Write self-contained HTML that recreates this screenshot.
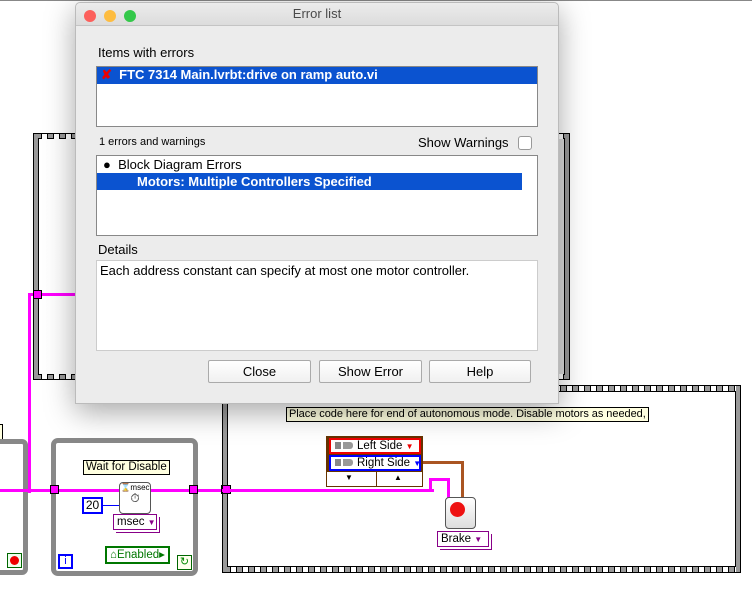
<!DOCTYPE html>
<html><head><meta charset="utf-8"><style>
*{box-sizing:border-box;margin:0;padding:0}
body{width:752px;height:589px;background:#fff;position:relative;overflow:hidden;font-family:"Liberation Sans",sans-serif;font-size:12px}
.a{position:absolute}
.film{position:absolute;background:#ddd;border:1px solid #000}
.filmh{background-image:repeating-linear-gradient(90deg,transparent 0 3px,#000 3px 4px,#fff 4px 9px,#000 9px 10px,transparent 10px 12px);}
.pk{background:#f0f;}
.term{position:absolute;width:9px;height:9px;background:#f0f;border:1px solid #000}
.lbl{position:absolute;background:#ffffe0;border:1px solid #000;font-size:11.5px;padding:0 2px;line-height:13px;white-space:nowrap}
.dd{position:absolute;border:1px solid #808;background:#fff;font-size:11.5px;box-shadow:2px 2px 0 #fff,3px 3px 0 #808;white-space:nowrap}
.btn{position:absolute;top:360px;height:23px;border:1px solid #aaa;background:linear-gradient(#fff,#f0f0f0);text-align:center;line-height:21px;font-size:13px;border-radius:2px}
.plug{display:inline-block;width:18px;height:7px;margin-right:4px;vertical-align:0;background:linear-gradient(90deg,#888 0 6px,transparent 6px 8px,#999 8px);border-radius:0 3px 3px 0}
</style></head><body>
<div class="a" style="left:0;top:0;width:752px;height:1px;background:#888"></div>
<div class="film" style="left:33px;top:133px;width:537px;height:247px;background:#999"></div>
<div class="a" style="left:38px;top:138px;width:527px;height:237px;background:#000"></div>
<div class="a" style="left:39px;top:139px;width:525px;height:235px;background:linear-gradient(90deg,#fff,#eee 60%,#ddd)"></div>
<div class="a filmh" style="left:38px;top:134px;width:527px;height:5px"></div>
<div class="a filmh" style="left:38px;top:374px;width:527px;height:5px"></div>
<div class="a pk" style="left:28px;top:293px;width:3px;height:200px"></div>
<div class="a pk" style="left:28px;top:293px;width:48px;height:3px"></div>
<div class="term" style="left:33px;top:290px"></div>
<div class="a" style="left:0;top:424px;width:3px;height:18px;border:1px solid #000;border-left:0;background:#ffffe0"></div>
<div class="a" style="left:-10px;top:439px;width:38px;height:136px;border:5px solid #888;border-radius:6px"></div>
<div class="a" style="left:7px;top:553px;width:15px;height:15px;border:1px solid #060;background:#efe"><div style="margin:2px;width:9px;height:9px;border-radius:50%;background:#e00"></div></div>
<div class="a" style="left:51px;top:438px;width:147px;height:138px;border:5px solid #888;border-radius:7px"></div>
<div class="lbl" style="left:83px;top:460px">Wait for Disable</div>
<div class="a pk" style="left:0;top:489px;width:432px;height:3px"></div>
<div class="term" style="left:50px;top:485px"></div>
<div class="term" style="left:189px;top:485px"></div>
<div class="term" style="left:221px;top:485px"></div>
<div class="a" style="left:82px;top:497px;width:21px;height:17px;border:2px solid #00f;background:#fff;font-size:12px;text-align:center;line-height:13px">20</div>
<div class="a" style="left:103px;top:505px;width:17px;height:1px;background:#00f"></div>
<div class="a" style="left:119px;top:482px;width:32px;height:32px;border:1px solid #555;border-radius:4px;background:#fff;font-size:8px;text-align:center;line-height:10px">⌛msec<br><span style="font-size:12px">⏱</span></div>
<div class="dd" style="left:113px;top:514px;width:44px;height:16px;padding-left:3px;line-height:14px">msec <span style="color:#808;font-size:8px">▼</span></div>
<div class="a" style="left:105px;top:546px;width:65px;height:18px;border:2px solid #070;background:#fff;color:#070;font-size:11.5px;line-height:14px;padding-left:3px">⌂Enabled▸</div>
<div class="a" style="left:58px;top:554px;width:15px;height:15px;border:2px solid #00f;background:#fff;color:#00f;font-size:11px;text-align:center;line-height:11px">i</div>
<div class="a" style="left:177px;top:555px;width:15px;height:15px;border:1px solid #060;background:#ffe;color:#080;font-size:11px;text-align:center;line-height:13px">↻</div>
<div class="film" style="left:222px;top:385px;width:519px;height:188px;background:#999"></div>
<div class="a" style="left:227px;top:391px;width:509px;height:176px;background:#000"></div>
<div class="a" style="left:228px;top:392px;width:507px;height:174px;background:#fff"></div>
<div class="a filmh" style="left:227px;top:386px;width:509px;height:5px"></div>
<div class="a filmh" style="left:227px;top:567px;width:509px;height:5px"></div>
<div class="term" style="left:222px;top:485px"></div>
<div class="a pk" style="left:222px;top:489px;width:212px;height:3px"></div>
<div class="lbl" style="left:286px;top:407px;font-size:11px;letter-spacing:-0.05px">Place code here for end of autonomous mode. Disable motors as needed,</div>
<div class="a" style="left:326px;top:436px;width:97px;height:51px;border:1px solid #630;background:#fff"></div>
<div class="a" style="left:327px;top:437px;width:95px;height:35px;background:#630"></div>
<div class="a" style="left:329px;top:438px;width:92px;height:16px;border:2px solid #e00;background:#fff;font-size:11.5px;line-height:12px;padding-left:4px;white-space:nowrap"><span class="plug"></span>Left Side <span style="color:#e00;font-size:8px">▼</span></div>
<div class="a" style="left:329px;top:455px;width:92px;height:16px;border:2px solid #00f;background:#fff;font-size:11.5px;line-height:12px;padding-left:4px;white-space:nowrap"><span class="plug"></span>Right Side <span style="color:#00f;font-size:8px">▼</span></div>
<div class="a" style="left:376px;top:472px;width:1px;height:14px;background:#630"></div>
<div class="a" style="left:345px;top:473px;font-size:8px">▼</div><div class="a" style="left:394px;top:473px;font-size:8px">▲</div>
<div class="a" style="left:423px;top:461px;width:40px;height:3px;background:#a52"></div>
<div class="a" style="left:461px;top:461px;width:3px;height:38px;background:#a52"></div>
<div class="a pk" style="left:429px;top:478px;width:3px;height:14px"></div>
<div class="a pk" style="left:429px;top:478px;width:21px;height:3px"></div>
<div class="a pk" style="left:447px;top:478px;width:3px;height:20px"></div>
<div class="a" style="left:445px;top:497px;width:31px;height:32px;border:1px solid #555;border-radius:4px;background:linear-gradient(#fff,#ddd)"><div style="margin:4px 0 0 4px;width:15px;height:15px;border-radius:50%;background:#e11"></div></div>
<div class="dd" style="left:437px;top:531px;width:52px;height:16px;padding-left:3px;line-height:14px">Brake <span style="color:#808;font-size:8px">▼</span></div>
<div class="a" style="left:75px;top:2px;width:484px;height:402px;background:#ececec;border:1px solid #bbb;border-radius:5px 5px 0 0;box-shadow:0 8px 30px rgba(0,0,0,.35)">
 <div style="height:23px;background:linear-gradient(#ececec,#dcdcdc);border-bottom:1px solid #c4c4c4;border-radius:5px 5px 0 0;text-align:center;line-height:22px;font-size:13px;color:#4a4a4a">Error list</div>
 <div class="a" style="left:8px;top:7px;width:12px;height:12px;border-radius:50%;background:#fc605c"></div>
 <div class="a" style="left:28px;top:7px;width:12px;height:12px;border-radius:50%;background:#fdbc40"></div>
 <div class="a" style="left:48px;top:7px;width:12px;height:12px;border-radius:50%;background:#34c84a"></div>
</div>
<div class="a" style="left:98px;top:45px;font-size:13px">Items with errors</div>
<div class="a" style="left:96px;top:66px;width:442px;height:61px;border:1px solid #888;background:#fff"><div style="background:#0b53d0;color:#fff;height:17px;line-height:16px;font-size:13px;font-weight:bold;padding-left:4px;white-space:nowrap"><span style="color:#e00">✘</span>&nbsp; FTC 7314 Main.lvrbt:drive on ramp auto.vi</div></div>
<div class="a" style="left:99px;top:136px;font-size:11px">1 errors and warnings</div>
<div class="a" style="left:418px;top:135px;font-size:13px">Show Warnings</div>
<div class="a" style="left:518px;top:136px;width:14px;height:14px;border:1px solid #999;border-radius:3px;background:#fff"></div>
<div class="a" style="left:96px;top:155px;width:442px;height:81px;border:1px solid #888;background:#fff;font-size:13px">
 <div style="height:17px;line-height:17px;padding-left:6px">●&nbsp; Block Diagram Errors</div>
 <div style="background:#0b53d0;color:#fff;height:17px;line-height:17px;width:425px;padding-left:40px;font-weight:bold">Motors: Multiple Controllers Specified</div>
</div>
<div class="a" style="left:98px;top:242px;font-size:13px">Details</div>
<div class="a" style="left:96px;top:260px;width:442px;height:91px;border:1px solid #ccc;background:#fff;font-size:13px;padding:2px 3px">Each address constant can specify at most one motor controller.</div>
<div class="btn" style="left:208px;width:103px">Close</div>
<div class="btn" style="left:319px;width:103px">Show Error</div>
<div class="btn" style="left:429px;width:102px">Help</div>
</body></html>
